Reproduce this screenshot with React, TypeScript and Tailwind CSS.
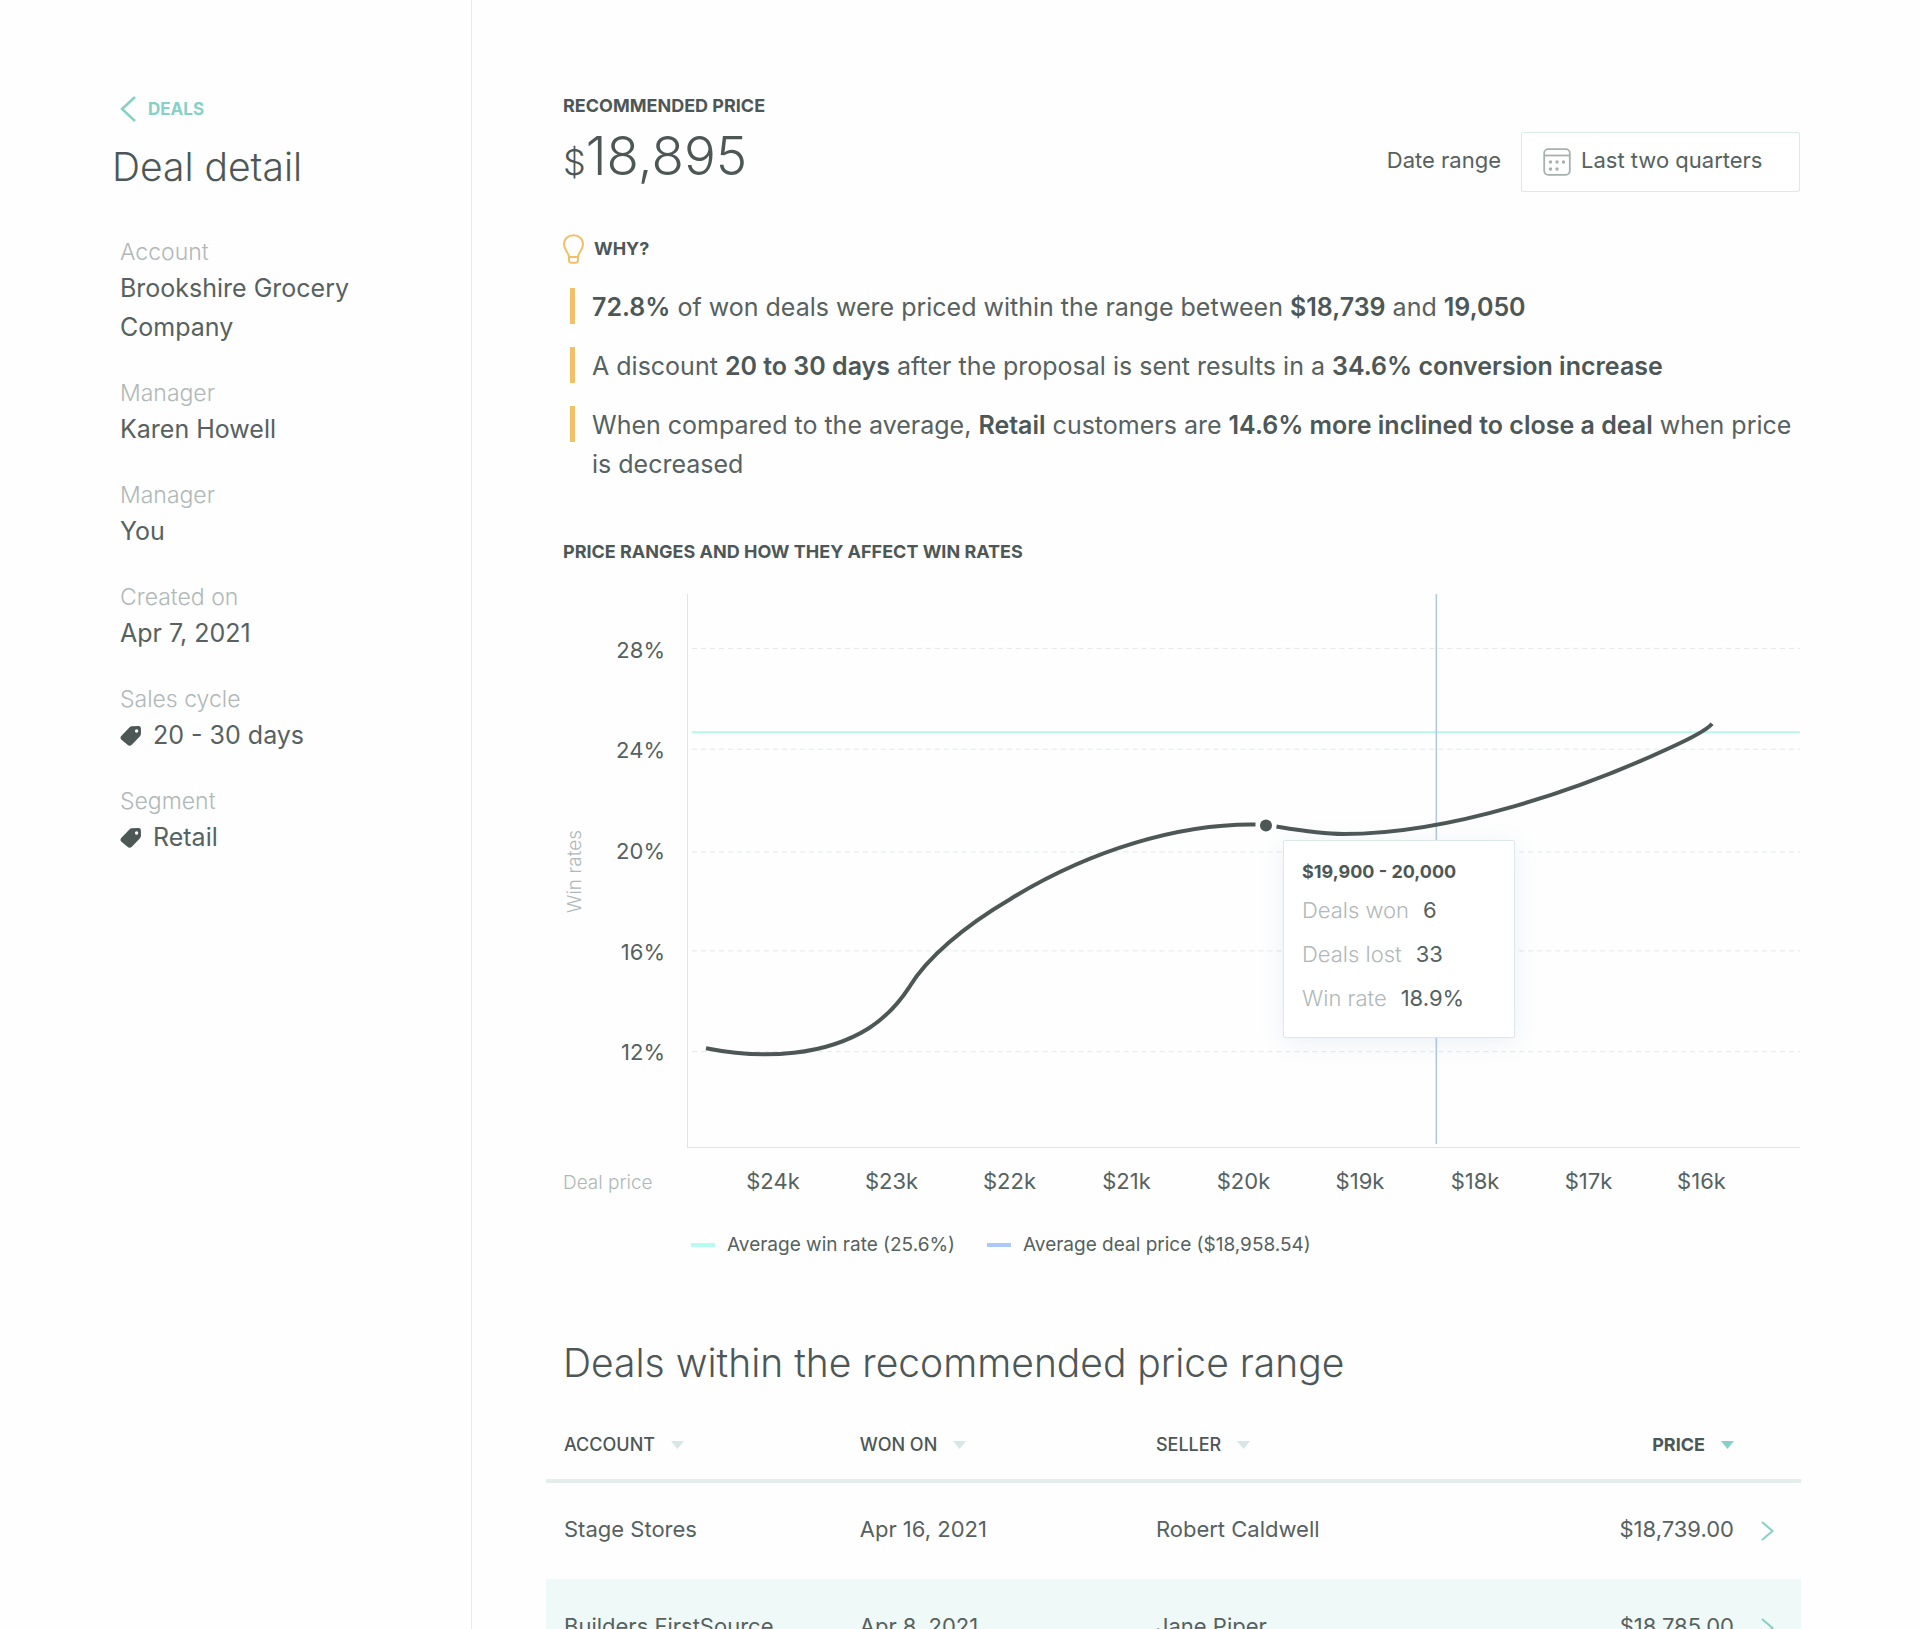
import type { ReactNode } from "react";

const details: { label: string; value: string; tagged?: boolean }[] = [
  { label: "Account", value: "Brookshire Grocery Company" },
  { label: "Manager", value: "Karen Howell" },
  { label: "Manager", value: "You" },
  { label: "Created on", value: "Apr 7, 2021" },
  { label: "Sales cycle", value: "20 - 30 days", tagged: true },
  { label: "Segment", value: "Retail", tagged: true },
];

const winRates = ["28%", "24%", "20%", "16%", "12%"];
const gridLines = [54.5, 155.5, 258.5, 357.5, 458.5];
const prices = ["$24k", "$23k", "$22k", "$21k", "$20k", "$19k", "$18k", "$17k", "$16k"];

const tooltipRows = [
  { label: "Deals won", value: "6" },
  { label: "Deals lost", value: "33" },
  { label: "Win rate", value: "18.9%" },
];

const deals = [
  { account: "Stage Stores", won: "Apr 16, 2021", seller: "Robert Caldwell", price: "$18,739.00" },
  { account: "Builders FirstSource", won: "Apr 8, 2021", seller: "Jane Piper", price: "$18,785.00" },
];

function TagIcon() {
  return (
    <svg viewBox="0 0 22 22" className="h-[22px] w-[22px] shrink-0" aria-hidden="true">
      <path
        fill="#4d5756"
        fillRule="evenodd"
        d="M12 1.3 18.5 1Q20.8 1 20.9 3.3L21 8.6Q21 10 20 11.200L11.800 19.800Q9.600 21.700 7.500 19.800L1.200 14.400Q-.2 12.600 1.200 10.900L9.400 2.400Q10.500 1.300 12 1.300ZM16.600 4.300A1.700 1.700 0 1 0 16.600 7.700A1.700 1.700 0 1 0 16.600 4.300Z"
      />
    </svg>
  );
}

function BulbIcon() {
  return (
    <svg viewBox="0 0 22 30" className="h-[30px] w-[22px]" fill="none" stroke="#f2c066" strokeWidth="2" aria-hidden="true">
      <path d="M6 23C5.500 18 1 16 1 10.500C1 5 5 1.200 10.500 1.200S20 5 20 10.500C20 16 15.500 18 15 23Z" strokeLinejoin="round" />
      <path d="M6 23V26.500Q6.200 28.800 8.500 28.800H12.500Q14.800 28.800 15 26.500V23" />
    </svg>
  );
}

function CalendarIcon() {
  return (
    <svg viewBox="0 0 28 28" className="h-7 w-7 shrink-0" fill="none" aria-hidden="true">
      <rect x="1.200" y="1.200" width="25.600" height="25.600" rx="4" stroke="#a6b0af" strokeWidth="1.800" />
      <path d="M1.200 7.500H26.800" stroke="#a6b0af" strokeWidth="1.800" />
      <g fill="#a6b0af">
        <circle cx="7.500" cy="14" r="1.700" />
        <circle cx="14" cy="14" r="1.700" />
        <circle cx="20.500" cy="14" r="1.700" />
        <circle cx="7.500" cy="21" r="1.700" />
        <circle cx="14" cy="21" r="1.700" />
      </g>
    </svg>
  );
}

function Caption({ children }: { children: ReactNode }) {
  return <h2 className="text-[18px] leading-6 font-bold text-[#4d5756] uppercase">{children}</h2>;
}

function Strong({ children }: { children: ReactNode }) {
  return <b className="font-semibold text-[#4d5756]">{children}</b>;
}

function Reason({ children }: { children: ReactNode }) {
  return (
    <li className="flex items-start gap-[17px]">
      <span className="h-9 w-[5px] shrink-0 bg-[#f2c066]" />
      <p className="text-[25px] leading-[39px]">{children}</p>
    </li>
  );
}

function SortButton({ children, active }: { children: string; active?: boolean }) {
  return (
    <button
      type="button"
      className={
        active
          ? "inline-flex items-center gap-4 text-[18px] leading-6 font-bold text-[#4d5756] uppercase"
          : "inline-flex items-center gap-4 text-[18px] leading-6 font-medium text-[#4d5756] uppercase"
      }
    >
      {children}
      <svg viewBox="0 0 13 8" className="h-2 w-[13px]" aria-hidden="true">
        <path d="M0 0H13L6.500 8Z" fill={active ? "#86d1c6" : "#d7e7e5"} />
      </svg>
    </button>
  );
}

function WinRateChart() {
  return (
    <svg
      viewBox="0 0 1113 554"
      preserveAspectRatio="none"
      className="block h-[553px] w-full"
      role="img"
      aria-label="Win rate by deal price"
      fill="none"
    >
      <g stroke="#e0eae9" strokeWidth="1" strokeDasharray="5 4">
        {gridLines.map((y) => (
          <path key={y} d={`M4 ${y}H1113`} />
        ))}
      </g>
      <path d="M4 138.500H1113" stroke="#baf5ec" strokeWidth="2" />
      <path d="M749 0V551" stroke="#adc6ee" strokeWidth="1.500" />
      <path
        stroke="#4d5756"
        strokeWidth="4"
        d="M18 455C78 467 138 462 181 435C198 424 211 410 222 393C239 365 276 333 322 306C403 256 493 230 568 231"
      />
      <path stroke="#4d5756" strokeWidth="4" d="M589 233C613 237 633 240.500 656 240.500C763 240.500 893 196 983 154C1003 145 1019 137 1025 130" />
      <circle cx="578.500" cy="232" r="6" fill="#4d5756" />
    </svg>
  );
}

export default function App() {
  return (
    <div className="flex h-screen overflow-hidden bg-[#fefefe] font-['Inter',sans-serif] font-normal text-[#566160]">
      <aside className="w-[472px] shrink-0 border-r border-[#e3ebeb] pt-[95px] pr-24 pl-[120px]">
        <a href="#deals" className="flex items-center gap-3 text-[17px] leading-7 font-bold text-[#86d1c6]">
          <svg viewBox="0 0 16 26" className="h-[26px] w-4" fill="none" stroke="#86d1c6" strokeWidth="2.500" aria-hidden="true">
            <path d="M15 1 2 13 15 25" />
          </svg>
          DEALS
        </a>
        <h1 className="mt-5 -ml-2 text-[39px] leading-[48px] font-light text-[#4d5756]">Deal detail</h1>
        <dl className="mt-[45px] flex flex-col gap-[30px]">
          {details.map((item, i) => (
            <div key={i}>
              <dt className="text-[23px] leading-[33px] font-light text-[#b0b8b8]">{item.label}</dt>
              <dd className="flex items-center gap-[11px] text-[25px] leading-[39px]">
                {item.tagged && <TagIcon />}
                <span>{item.value}</span>
              </dd>
            </div>
          ))}
        </dl>
      </aside>

      <main className="min-w-0 flex-1 pt-[94px] pr-[119px] pl-[74px]">
        <div className="pr-px pl-[17px]">
          <div className="flex items-start justify-between">
            <div>
              <Caption>Recommended price</Caption>
              <p className="text-[53px] leading-[76px] font-light text-[#4d5756]">
                <span className="text-[36px]">$</span>18,895
              </p>
            </div>
            <div className="mt-[38px] flex items-center gap-5">
              <label htmlFor="range" className="pb-1 text-[22px] leading-8">
                Date range
              </label>
              <div className="flex h-[60px] w-[279px] items-center gap-2.5 rounded-xs border border-[#dbe9e7] bg-white pl-[21px]">
                <CalendarIcon />
                <select id="range" className="flex-1 appearance-none bg-transparent pb-1 text-[22px] leading-8 outline-none">
                  <option>Last two quarters</option>
                </select>
              </div>
            </div>
          </div>

          <section>
            <div className="mt-[34px] flex items-center gap-[9px]">
              <BulbIcon />
              <Caption>Why?</Caption>
            </div>
            <ul className="mt-6 flex flex-col gap-5 pl-[7px]">
              <Reason>
                <Strong>72.8%</Strong> of won deals were priced within the range between <Strong>$18,739</Strong> and{" "}
                <Strong>19,050</Strong>
              </Reason>
              <Reason>
                A discount <Strong>20 to 30 days</Strong> after the proposal is sent results in a{" "}
                <Strong>34.6% conversion increase</Strong>
              </Reason>
              <Reason>
                When compared to the average, <Strong>Retail</Strong> customers are{" "}
                <Strong>14.6% more inclined to close a deal</Strong> when price is decreased
              </Reason>
            </ul>
          </section>

          <section className="mt-[56px]">
            <Caption>Price ranges and how they affect win rates</Caption>
            <div className="mt-[30px] flex">
              <div className="flex w-[124px] shrink-0 justify-between pr-[22px]">
                <span className="rotate-180 self-center text-[19px] leading-6 font-light text-[#b0b8b8] [writing-mode:vertical-rl]">Win rates</span>
                <div className="mt-1.5 flex h-[503px] flex-col text-right text-[22px]">
                  {winRates.map((rate) => (
                    <span key={rate} className="flex flex-1 items-center justify-end">
                      {rate}
                    </span>
                  ))}
                </div>
              </div>
              <div className="relative flex-1 border-b border-l border-[#dbe7e6]">
                <WinRateChart />
                <div className="absolute top-[246px] left-[595px] h-[198px] w-[232px] rounded-xs border border-[#dbe9e7] bg-white pt-[19px] pl-[18px] shadow-[0_4px_24px_rgba(100,140,190,0.12)]">
                  <p className="mb-1 text-[18px] leading-6 font-bold text-[#4d5756]">$19,900 - 20,000</p>
                  {tooltipRows.map((row) => (
                    <p key={row.label} className="flex gap-3.5 text-[22px] leading-[44px]">
                      <span className="font-light text-[#b0b8b8]">{row.label}</span>
                      <span>{row.value}</span>
                    </p>
                  ))}
                </div>
              </div>
            </div>
            <div className="mt-[15px] flex items-center">
              <span className="w-[151px] shrink-0 pt-1 text-[19px] leading-8 font-light text-[#b0b8b8]">Deal price</span>
              <div className="mr-[42px] grid flex-1 grid-cols-[118fr_119fr_117fr_117fr_117fr_116fr_114fr_113fr_113fr] text-center text-[22px] leading-8">
                {prices.map((price) => (
                  <span key={price}>{price}</span>
                ))}
              </div>
            </div>
            <div className="mt-8 flex items-center gap-8 pl-32 text-[19px] leading-7">
              <span className="flex items-center gap-3">
                <span className="h-1 w-6 bg-[#b4fbf0]" />
                Average win rate (25.6%)
              </span>
              <span className="flex items-center gap-3">
                <span className="h-1 w-6 bg-[#adc8fb]" />
                Average deal price ($18,958.54)
              </span>
            </div>
          </section>

          <h2 className="mt-20 text-[39px] leading-[48px] font-light text-[#4d5756]">Deals within the recommended price range</h2>
        </div>

        <table className="mt-8 w-full table-fixed border-collapse text-left">
          <colgroup>
            <col className="w-[25%]" />
            <col className="w-[23.6%]" />
            <col className="w-[20%]" />
            <col />
            <col className="w-[67px]" />
          </colgroup>
          <thead>
            <tr className="h-[62px] border-b-4 border-[#e3edec] [&>th]:pb-2">
              <th className="pl-[18px]">
                <SortButton>Account</SortButton>
              </th>
              <th>
                <SortButton>Won on</SortButton>
              </th>
              <th>
                <SortButton>Seller</SortButton>
              </th>
              <th className="text-right">
                <SortButton active>Price</SortButton>
              </th>
              <th aria-label="Open" />
            </tr>
          </thead>
          <tbody>
            {deals.map((deal) => (
              <tr key={deal.account} className="h-[98px] text-[22px] even:bg-[#eff9f8] [&>td]:pb-1">
                <td className="pl-[18px]">{deal.account}</td>
                <td>{deal.won}</td>
                <td>{deal.seller}</td>
                <td className="text-right">{deal.price}</td>
                <td className="pl-[27px]">
                  <button type="button" aria-label={`Open ${deal.account}`} className="mt-1 block">
                    <svg viewBox="0 0 13 20" className="h-5 w-[13px]" fill="none" stroke="#86d1c6" strokeWidth="2" aria-hidden="true">
                      <path d="M1 1 11.500 10 1 19" />
                    </svg>
                  </button>
                </td>
              </tr>
            ))}
          </tbody>
        </table>
      </main>
    </div>
  );
}
